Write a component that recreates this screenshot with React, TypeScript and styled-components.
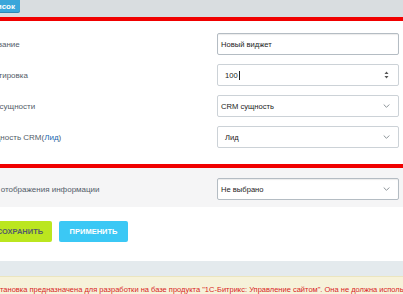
import React from "react";
import styled, { createGlobalStyle } from "styled-components";

const Global = createGlobalStyle`
  html, body { margin: 0; padding: 0; background: #fff; overflow: hidden; }
  body { font-family: "Liberation Sans", Arial, sans-serif; width: 403px; height: 294px; }
`;

const Page = styled.div`
  width: 403px;
  height: 294px;
  overflow: hidden;
  display: flex;
  flex-direction: column;
`;

const TopBar = styled.div`
  height: 17px;
  background: #d9dde0;
  display: flex;
  align-items: flex-start;
  flex: none;
`;

const TabButton = styled.div`
  flex: none;
  width: 60px;
  margin-left: -40px;
  height: 12px;
  background: #3aa6da;
  border-radius: 0 0 2px 0;
  box-shadow: 0 1px 0 #2f86b3;
  color: #fff;
  font-size: 8px;
  font-weight: bold;
  display: flex;
  align-items: center;
  justify-content: flex-end;
  padding-right: 5px;
  box-sizing: border-box;
  text-transform: lowercase;
`;

const RedLine = styled.div<{ $h: number }>`
  height: ${(p) => p.$h}px;
  background: #f00000;
  flex: none;
`;

const Section = styled.div<{ $bg: string; $pt: number; $pb: number }>`
  background: ${(p) => p.$bg};
  padding: ${(p) => p.$pt}px 4px ${(p) => p.$pb}px 0;
  margin-left: -16px;
  display: grid;
  grid-template-columns: 233px 182px;
  row-gap: 9px;
  align-items: center;
  flex: none;
`;

const Label = styled.div`
  font-size: 8px;
  color: #535c69;
  white-space: nowrap;
`;

const Link = styled.span`
  color: #2067b0;
`;

const Field = styled.div<{ $pl?: number; $dark?: boolean }>`
  position: relative;
  height: 22px;
  box-sizing: border-box;
  border: 1px solid ${(p) => (p.$dark ? "#b4bcc3" : "#ccd2d7")};
  border-radius: 2px;
  background: #fff;
  box-shadow: ${(p) => (p.$dark ? "inset 0 1px 1px rgba(0,0,0,0.08)" : "none")};
  display: flex;
  align-items: center;
  padding-left: ${(p) => p.$pl ?? 3}px;
  font-size: 7.6px;
  color: #222;
  white-space: nowrap;
`;

const Caret = styled.span`
  display: inline-block;
  width: 1px;
  height: 9px;
  background: #222;
  margin-left: 1px;
`;

const IconBox = styled.span<{ $r: number }>`
  position: absolute;
  right: ${(p) => p.$r}px;
  top: 50%;
  transform: translateY(-50%);
  display: flex;
`;

const Chevron = () => (
  <IconBox $r={8}>
    <svg width="7" height="5" viewBox="0 0 7 5">
      <path d="M0.7 1 L3.5 3.8 L6.3 1" fill="none" stroke="#8a9196" strokeWidth="1" />
    </svg>
  </IconBox>
);

const Spinner = () => (
  <IconBox $r={9}>
    <svg width="5" height="9" viewBox="0 0 5 9">
      <path d="M0.5 3.5 L2.5 1 L4.5 3.5 Z" fill="#555" />
      <path d="M0.5 5.5 L2.5 8 L4.5 5.5 Z" fill="#555" />
    </svg>
  </IconBox>
);

const ButtonRow = styled.div`
  display: flex;
  gap: 7px;
  padding: 14px 0 19px;
  margin-left: -12px;
  background: #fff;
  flex: none;
`;

const Btn = styled.div<{ $bg: string; $fg: string; $w: number }>`
  flex: none;
  width: ${(p) => p.$w}px;
  height: 21px;
  background: ${(p) => p.$bg};
  color: ${(p) => p.$fg};
  font-size: 7.5px;
  font-weight: bold;
  display: flex;
  align-items: center;
  justify-content: center;
  border-radius: 2px;
`;

const Band = styled.div`
  height: 15px;
  background: #e4eaed;
  flex: none;
`;

const Warning = styled.div`
  flex: 1;
  background: #f6f2da;
  border-top: 1px solid #ebe5bf;
  color: #d81e1e;
  font-size: 7.5px;
  white-space: nowrap;
  padding-top: 8px;
`;

export default function App() {
  return (
    <>
      <Global />
      <Page>
        <TopBar>
          <TabButton>Список</TabButton>
        </TopBar>
        <RedLine $h={4} />
        <Section $bg="#fff" $pt={12} $pb={16}>
          <Label>Название</Label>
          <Field $dark>Новый виджет</Field>
          <Label>Сортировка</Label>
          <Field $pl={7}>
            100
            <Caret />
            <Spinner />
          </Field>
          <Label>Тип сущности</Label>
          <Field>
            CRM сущность
            <Chevron />
          </Field>
          <Label>
            Сущность CRM(<Link>Лид</Link>)
          </Label>
          <Field $pl={7}>
            Лид
            <Chevron />
          </Field>
        </Section>
        <RedLine $h={4} />
        <Section $bg="#f5f5f6" $pt={10} $pb={7}>
          <Label>Вид отображения информации</Label>
          <Field $dark>
            Не выбрано
            <Chevron />
          </Field>
        </Section>
        <ButtonRow>
          <Btn $bg="#bbe61f" $fg="#535c69" $w={64}>СОХРАНИТЬ</Btn>
          <Btn $bg="#3bc8f5" $fg="#fff" $w={69}>ПРИМЕНИТЬ</Btn>
        </ButtonRow>
        <Band />
        <Warning>
          тановка предназначена для разработки на базе продукта "1С-Битрикс: Управление сайтом". Она не должна использоваться
        </Warning>
      </Page>
    </>
  );
}
